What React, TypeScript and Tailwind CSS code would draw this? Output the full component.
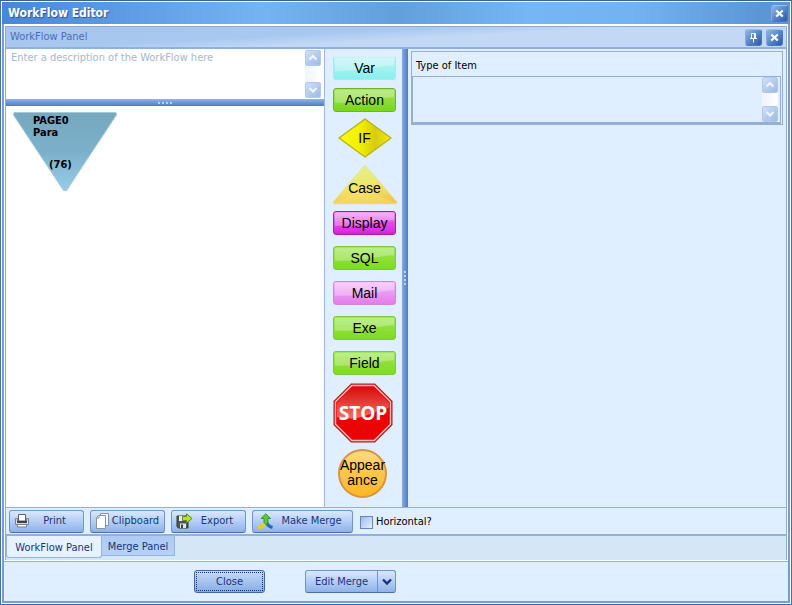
import React, { useState } from 'react';
import clsx from 'clsx';

interface PaletteButton {
    label: string;
    className: string;
}

const BUTTONS: PaletteButton[] = [
    { label: 'Display', className: 'mt-1.5 border-[#a81cb0] bg-linear-to-b from-[#ee9bf0] via-[#e04ce4] to-[#dc18e0]' },
    { label: 'SQL', className: 'mt-[11px] border-[#7cc93c] bg-linear-to-b from-[#a2e85c] via-[#8fe03a] to-[#7edb1c]' },
    { label: 'Mail', className: 'mt-[11px] border-[#cf86dc] bg-linear-to-b from-[#f4c4f8] via-[#ea98f2] to-[#e37ded]' },
    { label: 'Exe', className: 'mt-[11px] border-[#7cc93c] bg-linear-to-b from-[#a2e85c] via-[#8fe03a] to-[#7edb1c]' },
    { label: 'Field', className: 'mt-[11px] border-[#7cc93c] bg-linear-to-b from-[#a2e85c] via-[#8fe03a] to-[#7edb1c]' },
];

const GlossButton: React.FC<PaletteButton> = ({ label, className }) => (
    <button
        className={clsx(
            'relative flex h-6 w-[63px] items-center justify-center overflow-hidden rounded-[3px] border text-sm leading-4',
            className
        )}
    >
        <svg className="absolute inset-0 h-full w-full" viewBox="0 0 63 24" preserveAspectRatio="none">
            <path d="M1 1H62V9C48 9 34 16 1 15Z" fill="#fff" fillOpacity=".28" />
        </svg>
        <span className="relative">{label}</span>
    </button>
);

const ScrollButton: React.FC<{ dir: 'up' | 'down' }> = ({ dir }) => (
    <button
        aria-label={`Scroll ${dir}`}
        className="flex size-4 items-center justify-center rounded-[2px] border border-[#b3c8ea] bg-linear-to-br from-[#cfdff7] to-[#9dbae6]"
    >
        <svg width="10" height="8" viewBox="0 0 10 8" fill="none" stroke="#f0f7ff" strokeWidth="2">
            <path d={dir === 'up' ? 'M1.5 5.5L5 2L8.500 5.500' : 'M1.5 2L5 5.500L8.500 2'} />
        </svg>
    </button>
);

const ScrollBar = () => (
    <div className="flex w-4 flex-none flex-col justify-between bg-linear-to-r from-[#eef4fc] to-white">
        <ScrollButton dir="up" />
        <ScrollButton dir="down" />
    </div>
);

const CaptionButton: React.FC<{ label: string; pin?: boolean }> = ({ label, pin }) => (
    <button
        aria-label={label}
        className="flex size-[17px] items-center justify-center rounded-[3px] border border-[#4a78bd] border-t-[#9dbfee] border-l-[#86acdf] bg-linear-to-br from-[#8fb5ec] via-[#5a88cc] to-[#2c58a4]"
    >
        {pin ? (
            <svg width="9" height="11" viewBox="0 0 9 11" fill="none" stroke="#fff">
                <path d="M2.500 6V1.500H6.500V6M1 6.500H8M4.500 7V10.500" />
                <path d="M5.500 1.500V6" />
            </svg>
        ) : (
            <svg width="9" height="9" viewBox="0 0 9 9" fill="none" stroke="#fff" strokeWidth="2.200">
                <path d="M1.200 1.500L7.800 7.500M7.800 1.500L1.200 7.500" />
            </svg>
        )}
    </button>
);

const PrintIcon = () => (
    <svg width="16" height="16" viewBox="0 0 16 16">
        <path d="M4.500 1.500H11.500V8H4.500Z" fill="#fff" stroke="#59606c" />
        <path d="M1.500 5.500H3.500V8.500H12.500V5.500H14.500V11.500H1.500Z" fill="#d3d7de" stroke="#7a828e" />
        <path d="M3 8H13V10H3Z" fill="#3d434c" />
        <path d="M3.500 11.500H12.500V14H3.500Z" fill="#fff" stroke="#767e8a" />
        <path d="M2 9.500H3M13 9.500H14" stroke="#fff" />
    </svg>
);

const ClipboardIcon = () => (
    <svg width="16" height="16" viewBox="0 0 16 16" fill="#f4f7fd" stroke="#8793a8">
        <path d="M5.500 .5H13.500V12.500H5.500Z" />
        <path d="M1.500 4.500L3.500 2.500H10.500V15.500H1.500Z" fill="#fff" />
        <path d="M1.500 5H4V2.500" fill="none" />
    </svg>
);

const ExportIcon = () => (
    <svg width="17" height="16" viewBox="0 0 17 16">
        <path d="M1 3H12V15H2.500L1 13.500Z" fill="#4d5757" stroke="#2f3838" />
        <path d="M3 3H9V8H3Z" fill="#e8edf0" />
        <path d="M4 10.500H10V15H4Z" fill="#dfe5e8" />
        <path d="M5 11.500H7V15H5Z" fill="#3a4242" />
        <path d="M6.500 3.500H10.500V.8L16 5.500L10.500 10V7.500H6.500Z" fill="#b7e22c" stroke="#5f8c12" />
    </svg>
);

const MergeIcon = () => (
    <svg width="18" height="17" viewBox="0 0 18 17" fill="none">
        <path d="M9.500 8C9.500 11 11.500 13.500 15.500 14.500" stroke="#2567b8" strokeWidth="3.200" />
        <path d="M8.500 8.500C8 12 5.500 14 1 14.500" stroke="#e8cf1c" strokeWidth="3.400" />
        <path d="M7 9.500V5.500H4L8.800 .8L13.500 5.500H10.800V9.500L9 11.500Z" fill="#55c936" stroke="#2d9a2d" />
    </svg>
);

const ToolButton: React.FC<{ label: string; icon: React.ReactNode; className: string }> = ({ label, icon, className }) => (
    <button
        className={clsx(
            'flex h-[23px] items-center rounded-[3px] border border-[#6f95cf] border-b-[#4a6ea8] bg-linear-to-b from-[#dae8fc] via-[#b4cdf4] to-[#8fb2e8] pr-1 pl-1 text-[#16367c]',
            className
        )}
    >
        {icon}
        <span className="flex-1 text-center">{label}</span>
    </button>
);

const App: React.FC = () => {
    const [tab, setTab] = useState('WorkFlow Panel');
    const [horizontal, setHorizontal] = useState(false);

    return (
        <div className="h-screen border border-t-[#3d5f94] border-r-[#3f6fb5] border-b-[#3a67b0] border-l-[#4a6fa8] font-['DejaVu_Sans_Condensed','DejaVu_Sans',sans-serif] text-[11px] leading-3 text-black [font-stretch:condensed]">
            <div className="flex h-full flex-col border border-white">
                <header className="flex h-[22px] flex-none items-center justify-between bg-[linear-gradient(90deg,#4a86d8_0%,#76b3f2_33%,#629fdb_50%,#76b6f5_67%,#74b3f2_80%,#5c96d6_96%)] pr-0.5 pl-1.5">
                    <h1 className="text-xs leading-4 font-bold text-white [text-shadow:1px_1px_1px_#2b5595]">WorkFlow Editor</h1>
                    <CaptionButton label="Close window" />
                </header>

                <div className="flex min-h-0 flex-1 flex-col border-x-2 border-b-2 border-[#7b9bd6] bg-[#e0efff]">
                    <main className="flex min-h-0 flex-1 flex-col border-x border-t-2 border-white">
                        <div className="flex min-h-0 flex-1 flex-col border border-[#8aabd2]">
                            <div className="flex h-[22px] flex-none items-center justify-between border-b-2 border-[#91b1dd] bg-[linear-gradient(177deg,#a5c5ee_0%,#a9c8f0_38%,#c2d8f5_54%,#c2d8f5_100%)] pr-[3px] pl-1">
                                <h2 className="text-[#4a6db5]">WorkFlow Panel</h2>
                                <div className="flex gap-1">
                                    <CaptionButton label="Pin panel" pin />
                                    <CaptionButton label="Close panel" />
                                </div>
                            </div>

                            <div className="flex min-h-0 flex-1">
                                <section className="flex w-[318px] flex-none flex-col bg-white">
                                    <div className="flex h-[50px] flex-none py-px pr-[3px]">
                                        <textarea
                                            aria-label="Description"
                                            placeholder="Enter a description of the WorkFlow here"
                                            className="flex-1 resize-none px-[5px] py-0.5 outline-none placeholder:text-[#a3b8cc]"
                                        />
                                        <ScrollBar />
                                    </div>
                                    <div className="flex h-[7px] flex-none items-center justify-center gap-0.5 border-t border-[#8fb0e0] bg-linear-to-b from-[#86abe2] to-[#4a7cc8]">
                                        {[0, 1, 2, 3].map((i) => (
                                            <span key={i} className="h-0.5 w-0.5 bg-[#b5d0f5]" />
                                        ))}
                                    </div>
                                    <div className="relative flex-1">
                                        <div className="absolute top-1.5 left-[7px] h-20 w-[104px] font-bold">
                                            <svg className="absolute inset-0" width="104" height="80" viewBox="0 0 104 80">
                                                <defs>
                                                    <linearGradient id="page" x1="0" y1="0" x2="0" y2="1">
                                                        <stop offset="0" stopColor="#76a8bf" />
                                                        <stop offset=".5" stopColor="#7cb0ca" />
                                                        <stop offset="1" stopColor="#98cbe8" />
                                                    </linearGradient>
                                                </defs>
                                                <path d="M1 .5H103L103.500 3L53.500 78.500L50.500 78.500L.5 3Z" fill="url(#page)" stroke="#a4c9db" strokeLinejoin="round" />
                                            </svg>
                                            <div className="relative pt-[3px] pl-5">
                                                <p>PAGE0</p>
                                                <p>Para</p>
                                                <p className="mt-5 pl-4">(76)</p>
                                            </div>
                                        </div>
                                    </div>
                                </section>

                                <aside className="flex w-[78px] flex-none flex-col items-center border-l border-[#9db9de] pt-[7px] pl-0.5 font-['Liberation_Sans',sans-serif] [font-stretch:normal]">
                                    <GlossButton
                                        label="Var"
                                        className="border-[#a0ecee] border-t-[#d4f2f8] bg-linear-to-b from-[#c8f3f6] via-[#a4f1f2] to-[#88f0ee]"
                                    />
                                    <GlossButton
                                        label="Action"
                                        className="mt-2 border-[#6bb52c] bg-linear-to-b from-[#a6e460] via-[#8fdc3a] to-[#76d814]"
                                    />
                                    <button className="relative mt-1.5 flex h-10 w-[54px] items-center justify-center text-sm leading-4">
                                        <svg className="absolute inset-0" width="54" height="40" viewBox="0 0 54 40">
                                            <defs>
                                                <linearGradient id="diamond">
                                                    <stop offset="0" stopColor="#f8fa14" />
                                                    <stop offset=".4" stopColor="#f0f000" />
                                                    <stop offset=".7" stopColor="#d6cc10" />
                                                    <stop offset="1" stopColor="#f2ee10" />
                                                </linearGradient>
                                            </defs>
                                            <path d="M27 1L53 20L27 39L1 20Z" fill="url(#diamond)" stroke="#b9b414" strokeWidth="1.500" strokeLinejoin="round" />
                                        </svg>
                                        <span className="relative">IF</span>
                                    </button>
                                    <button className="relative mt-1.5 flex h-[41px] w-[66px] items-end justify-center pb-[9px] text-sm leading-4">
                                        <svg className="absolute inset-0" width="66" height="41" viewBox="0 0 66 41">
                                            <defs>
                                                <linearGradient id="case" x1=".4" y1="0" x2=".6" y2="1">
                                                    <stop offset="0" stopColor="#e2f290" />
                                                    <stop offset=".6" stopColor="#f0e464" />
                                                    <stop offset="1" stopColor="#f2c450" />
                                                </linearGradient>
                                            </defs>
                                            <path d="M33 1L65 38L64 40H2L1 38Z" fill="url(#case)" stroke="#e8dc90" strokeWidth=".6" strokeLinejoin="round" />
                                            <path d="M2 40L30 25L64 39V40Z" fill="#f8ec78" fillOpacity=".35" />
                                        </svg>
                                        <span className="relative">Case</span>
                                    </button>
                                    {BUTTONS.map((button) => (
                                        <GlossButton key={button.label} {...button} />
                                    ))}
                                    <button aria-label="Stop" className="mt-2 mr-1 size-[60px]">
                                        <svg width="60" height="60" viewBox="0 0 60 60">
                                            <defs>
                                                <linearGradient id="shine" x1="0" y1="0" x2="0" y2="1">
                                                    <stop offset="0" stopColor="#d01010" />
                                                    <stop offset="1" stopColor="#f89a90" />
                                                </linearGradient>
                                            </defs>
                                            <path d="M18 .5H42L59.500 18V42L42 59.500H18L.5 42V18Z" fill="#c41212" />
                                            <path d="M18.800 2.500H41.200L57.500 18.800V41.200L41.200 57.500H18.800L2.500 41.200V18.800Z" fill="#ea0404" stroke="#f4c0bc" strokeWidth="1.400" />
                                            <path d="M19.500 4H40.500L56 19.500V25C40 27 28 40 4 34V19.500Z" fill="url(#shine)" fillOpacity=".7" />
                                            <text
                                                x="30"
                                                y="37"
                                                textAnchor="middle"
                                                fill="#fff"
                                                className="font-['Open_Sans',sans-serif] text-[19px] font-bold"
                                            >
                                                STOP
                                            </text>
                                        </svg>
                                    </button>
                                    <button className="mt-1.5 mr-1 flex size-[49px] items-center justify-center rounded-full border-2 border-[#dc9240] bg-linear-to-b from-[#fddb85] via-[#fcc64c] to-[#fdb81c] text-sm leading-[15px]">
                                        <span className="pb-0.5">
                                            Appear
                                            <br />
                                            ance
                                        </span>
                                    </button>
                                </aside>

                                <div className="flex w-1.5 flex-none flex-col items-center justify-center gap-0.5 bg-linear-to-r from-[#86abe2] to-[#4a7cc8]">
                                    {[0, 1, 2, 3].map((i) => (
                                        <span key={i} className="h-0.5 w-0.5 bg-[#b5d0f5]" />
                                    ))}
                                </div>

                                <section className="min-w-0 flex-1 py-0.5 pr-[3px] pl-[3px]">
                                    <div className="border border-[#93afd3]">
                                        <label htmlFor="item-type" className="flex h-6 items-center px-1 pt-1">
                                            Type of Item
                                        </label>
                                        <div className="mr-px flex h-[48px] border border-b-2 border-[#93afd3] pr-0.5">
                                            <textarea id="item-type" className="flex-1 resize-none bg-transparent p-1 outline-none" />
                                            <ScrollBar />
                                        </div>
                                    </div>
                                </section>
                            </div>

                            <div className="flex h-[29px] flex-none items-center gap-1.5 border-t border-b-2 border-[#93b0d8] pl-[3px]">
                                <ToolButton label="Print" icon={<PrintIcon />} className="w-[75px]" />
                                <ToolButton label="Clipboard" icon={<ClipboardIcon />} className="w-[75px]" />
                                <ToolButton label="Export" icon={<ExportIcon />} className="w-[75px]" />
                                <ToolButton label="Make Merge" icon={<MergeIcon />} className="w-[101px]" />
                                <label className="flex items-center gap-[3px] pt-0.5 pl-px">
                                    <input
                                        type="checkbox"
                                        checked={horizontal}
                                        onChange={(e) => setHorizontal(e.target.checked)}
                                        className="size-[13px] appearance-none border border-[#6585bb] bg-linear-to-br from-[#9dbce8] to-[#e6effc] checked:bg-[#2c58a4]"
                                    />
                                    Horizontal?
                                </label>
                            </div>

                            <nav className="flex h-6 flex-none items-start bg-[#d5e6f7]">
                                {['WorkFlow Panel', 'Merge Panel'].map((name) => (
                                    <button
                                        key={name}
                                        onClick={() => setTab(name)}
                                        className={clsx(
                                            'border-r border-b border-[#93b4de] pt-0.5 text-[#16367c]',
                                            tab === name
                                                ? 'h-[22px] w-24 rounded-b-[3px] border-l bg-[#e6f2ff]'
                                                : 'h-5 w-[73px] bg-linear-to-b from-[#accaf2] to-[#b5d1f6]'
                                        )}
                                    >
                                        {name}
                                    </button>
                                ))}
                            </nav>
                        </div>
                    </main>

                    <footer className="flex h-10 flex-none items-center gap-10 border-t border-[#93b0d8] pl-[190px] shadow-[0_-1px_0_#fff]">
                        <button className="h-[23px] w-[71px] rounded-[3px] border border-[#3f66a8] bg-linear-to-b from-[#c6daf8] to-[#86ade6] p-px text-[#16367c]">
                            <span className="flex h-full items-center justify-center border border-dotted border-[#1c3468]">Close</span>
                        </button>
                        <div className="flex h-[23px] rounded-[3px] border border-[#6f95cf] border-b-[#4a6ea8] bg-linear-to-b from-[#dae8fc] via-[#b4cdf4] to-[#8fb2e8] text-[#16367c]">
                            <button className="w-[72px] border-r border-[#6f95cf]">Edit Merge</button>
                            <button aria-label="More merge options" className="flex w-[17px] items-center justify-center">
                                <svg width="10" height="8" viewBox="0 0 10 8" fill="none" stroke="#16367c" strokeWidth="2.400">
                                    <path d="M1 1.500L5 5.500L9 1.500" />
                                </svg>
                            </button>
                        </div>
                    </footer>
                </div>
            </div>
        </div>
    );
};

export default App;
